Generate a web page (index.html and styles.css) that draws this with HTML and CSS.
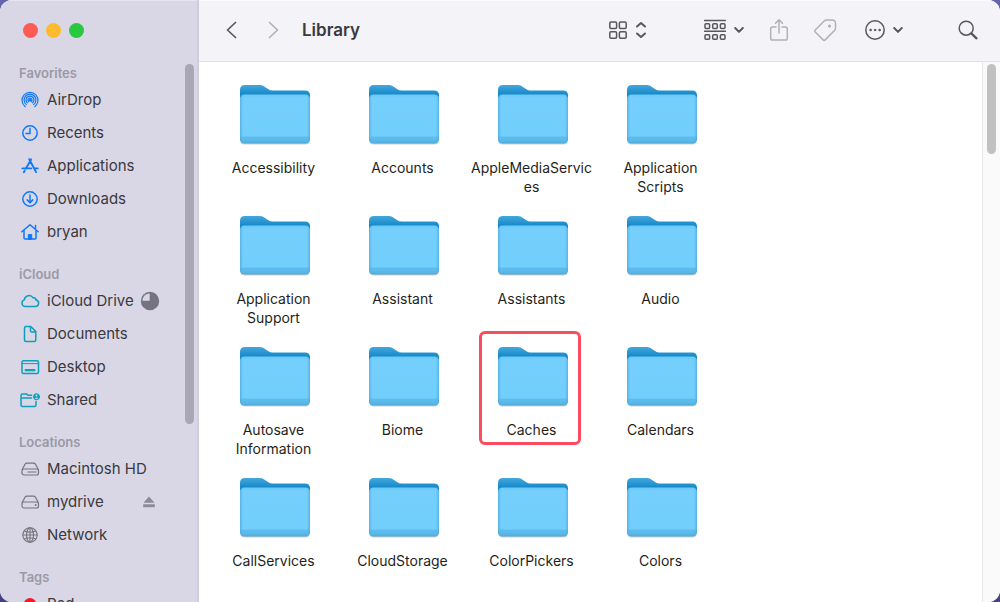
FILE: index.html
```html
<!DOCTYPE html>
<html lang="en">
<head>
<meta charset="utf-8">
<meta name="viewport" content="width=device-width, initial-scale=1">
<title>Library</title>
<link rel="stylesheet" href="styles.css">
</head>
<body>
<svg class="defs" aria-hidden="true">
  <defs>
    <linearGradient id="tab" x1="0" y1="0" x2="0" y2="1">
      <stop offset="0" stop-color="#43a7dc"/><stop offset=".3" stop-color="#1b8ccb"/><stop offset=".5" stop-color="#0c7fc2"/>
    </linearGradient>
    <linearGradient id="front" x1="0" y1="0" x2="0" y2="1">
      <stop offset="0" stop-color="#6bc9f8"/><stop offset=".08" stop-color="#74cffb"/><stop offset=".84" stop-color="#72cefb"/><stop offset=".88" stop-color="#5fbeee"/><stop offset=".97" stop-color="#55b5e8"/><stop offset="1" stop-color="#489fce"/>
    </linearGradient>
    <linearGradient id="sides">
      <stop offset="0" stop-color="#3f9fd2" stop-opacity=".6"/><stop offset=".05" stop-color="#57b9ec" stop-opacity="0"/><stop offset=".95" stop-color="#57b9ec" stop-opacity="0"/><stop offset="1" stop-color="#3f9fd2" stop-opacity=".6"/>
    </linearGradient>
    <symbol id="folder" viewBox="0 0 75 64">
      <path d="M4 20V7q0-5 5-5h15q3 0 5 2l3 2q2 1.500 5 1.500h32q5 0 5 5V30H4z" fill="url(#tab)"/>
      <rect x="4" y="12" width="70" height="49.500" rx="4.500" fill="#777" opacity=".35"/>
      <rect x="4" y="11.500" width="70" height="49" rx="4.500" fill="url(#front)"/>
      <rect x="4" y="11.500" width="70" height="49" rx="4.500" fill="url(#sides)"/>
      <path d="M5 54.500h68" stroke="#5ab9e9" stroke-width=".7"/>
    </symbol>
    <symbol id="chevron" viewBox="0 0 10 10"><path d="M1.200 3l3.800 3.900L8.800 3"/></symbol>
  </defs>
</svg>
<div class="window">
  <aside class="sidebar">
    <div class="lights">
      <button class="light close" aria-label="Close"></button>
      <button class="light minimize" aria-label="Minimize"></button>
      <button class="light zoom" aria-label="Zoom"></button>
    </div>
    <nav class="places">
      <section class="group">
        <h2 class="heading">Favorites</h2>
        <a class="place" href="#airdrop"><svg class="glyph blue" viewBox="0 0 20 20"><g stroke-width="1.200"><path d="M5.200 16.700A8 8 0 1 1 14.800 16.700"/><path d="M6.300 14.600A5.900 5.900 0 1 1 13.700 14.600"/><path d="M7.400 12.900A3.900 3.900 0 1 1 12.600 12.900"/><path d="M8.600 11.500A2 2 0 1 1 11.400 11.500"/></g><circle class="solid" cx="10" cy="10.200" r="1"/></svg>AirDrop</a>
        <a class="place" href="#recents"><svg class="glyph blue" viewBox="0 0 20 20"><circle cx="10" cy="10" r="7.200"/><path d="M10 5.500V10.500H6"/></svg>Recents</a>
        <a class="place" href="#applications"><svg class="glyph blue" viewBox="0 0 20 20"><g stroke-width="1.900"><path d="M10.800 4.200L5.700 12.800M9.200 3.200l6.900 12.900M2.300 12.400h9M14.700 12.400h3M4.700 14.800L3.800 16.300M11 3.200l-.7 1.200"/></g></svg>Applications</a>
        <a class="place" href="#downloads"><svg class="glyph blue" viewBox="0 0 20 20"><circle cx="10" cy="10" r="7.200"/><path d="M10 6v7.500M7.200 10.900L10 13.700l2.800-2.800"/></svg>Downloads</a>
        <a class="place" href="#bryan"><svg class="glyph blue" viewBox="0 0 20 20"><path d="M1.800 9.800L10 2.800l8.200 7M4 8.500V16q0 1 1 1h10q1 0 1-1V8.500M15.500 3.500v4"/><path class="solid" d="M8.300 17v-4.500h3.400V17z"/></svg>bryan</a>
      </section>
      <section class="group">
        <h2 class="heading">iCloud</h2>
        <a class="place" href="#icloud-drive"><svg class="glyph teal" viewBox="0 0 20 20"><path d="M5 15.500h10.300a3.300 3.300 0 0 0 .8-6.500 2.700 2.700 0 0 0-3-2.200A4.800 4.800 0 0 0 4.300 8.900 3.400 3.400 0 0 0 5 15.500z"/></svg>iCloud Drive<svg class="progress" viewBox="0 0 20 20" role="img" aria-label="Syncing"><circle cx="10" cy="10" r="9.200" fill="#75737f"/><path d="M9.700 2.400V9.700H2.400A7.600 7.600 0 0 1 9.700 2.400z" fill="#d9d7e5"/></svg></a>
        <a class="place" href="#documents"><svg class="glyph teal" viewBox="0 0 20 20"><path d="M6 2.500h4.800l5 5V16q0 1.500-1.500 1.500H6Q4.500 17.500 4.500 16V4Q4.500 2.500 6 2.500zM10.500 2.800V7q0 1 1 1h4"/></svg>Documents</a>
        <a class="place" href="#desktop"><svg class="glyph teal" viewBox="0 0 20 20"><rect x="2" y="3.800" width="16.500" height="12.700" rx="1.500"/><path d="M2 6.600h16.500" stroke-width="1"/><path class="solid" d="M5.500 12.500h9.500v1.300H5.500z"/></svg>Desktop</a>
        <a class="place" href="#shared"><svg class="glyph teal" viewBox="0 0 20 20"><path d="M11.500 5.200H8L6.700 4H2.500Q1 4 1 5.500V15q0 1.500 1.500 1.500H14.500q1.500 0 1.500-1.500v-3.500M1 8h10.500"/><circle class="solid" cx="16.500" cy="6.700" r="3"/><circle cx="16.500" cy="5.600" r="1" fill="#d9d7e5" stroke="none"/><path d="M14.700 8.700q1.800-2.200 3.600 0" fill="#d9d7e5" stroke="none"/></svg>Shared</a>
      </section>
      <section class="group">
        <h2 class="heading">Locations</h2>
        <a class="place" href="#macintosh-hd"><svg class="glyph gray" viewBox="0 0 20 20"><path d="M2.200 10.500L5 5.300Q5.600 4.200 7 4.200h6.500q1.400 0 2 1.100l2.800 5.200"/><rect x="2" y="10" width="16.500" height="6" rx="2"/><path d="M8 13h8" stroke-dasharray="1 .5"/></svg>Macintosh HD</a>
        <a class="place" href="#mydrive"><svg class="glyph gray" viewBox="0 0 20 20"><path d="M2.200 10.500L5 5.300Q5.600 4.200 7 4.200h6.500q1.400 0 2 1.100l2.800 5.200"/><rect x="2" y="10" width="16.500" height="6" rx="2"/><circle class="solid" cx="15.500" cy="13" r=".5"/></svg>mydrive<svg class="eject" viewBox="0 0 14 14" role="img" aria-label="Eject"><path d="M7 1.500l5.500 6.300h-11zM1.200 9.300h11.600v2.900H1.200z"/></svg></a>
        <a class="place" href="#network"><svg class="glyph gray" viewBox="0 0 20 20"><g stroke-width="1.100"><circle cx="10" cy="10" r="7.200"/><ellipse cx="10" cy="10" rx="3.500" ry="7.200"/><path d="M10 2.800v14.400M2.800 10h14.400M4.200 6q5.800 2.400 11.600 0M4.200 14q5.800-2.400 11.600 0"/></g></svg>Network</a>
      </section>
      <section class="group">
        <h2 class="heading">Tags</h2>
        <a class="place" href="#red"><svg class="glyph" viewBox="0 0 20 20"><circle cx="10" cy="10" r="6" fill="#fc1421" stroke="none"/></svg>Red</a>
      </section>
    </nav>
    <div class="thumb side-thumb"></div>
  </aside>
  <main class="main">
    <header class="toolbar">
      <button class="tool" aria-label="Back"><svg class="i20" viewBox="0 0 20 20"><path d="M14.500 2.500L6.500 10l8 7.500" stroke-width="1.700"/></svg></button>
      <button class="tool forward faint" aria-label="Forward"><svg class="i20" viewBox="0 0 20 20"><path d="M6.500 2.500l8 7.500-8 7.500" stroke-width="1.700"/></svg></button>
      <h1 class="title">Library</h1>
      <div class="tools">
        <button class="tool view" aria-label="View as icons"><svg class="i18" viewBox="0 0 18 18"><rect x=".8" y="1" width="6.800" height="6.500" rx="1.200"/><rect x="10.400" y="1" width="6.800" height="6.500" rx="1.200"/><rect x=".8" y="10.700" width="6.800" height="6.500" rx="1.200"/><rect x="10.400" y="10.700" width="6.800" height="6.500" rx="1.200"/></svg><svg class="updown" viewBox="0 0 12 18"><path d="M2 5.500L6 2l4 3.500M2 12.500L6 16l4-3.500"/></svg></button>
        <button class="tool arrange" aria-label="Group items"><svg class="i22" viewBox="0 0 22 22"><path d="M.5 1.500h21M.5 12.300h21"/><g><rect x="1" y="4.800" width="4.600" height="4.600" rx="1"/><rect x="8.700" y="4.800" width="4.600" height="4.600" rx="1"/><rect x="16.400" y="4.800" width="4.600" height="4.600" rx="1"/><rect x="1" y="15.700" width="4.600" height="4.600" rx="1"/><rect x="8.700" y="15.700" width="4.600" height="4.600" rx="1"/><rect x="16.400" y="15.700" width="4.600" height="4.600" rx="1"/></g></svg><svg class="chev"><use href="#chevron"/></svg></button>
        <button class="tool share faint" aria-label="Share"><svg class="i22" viewBox="0 0 22 22"><path d="M8 8H4.500Q2.700 8 2.700 9.800V19.200Q2.700 21 4.500 21H17.500q1.800 0 1.800-1.800V9.800Q19.300 8 17.500 8H14M11 14V1M7.500 4.300L11 .8l3.500 3.500"/></svg></button>
        <button class="tool tag faint" aria-label="Edit tags"><svg class="i24" viewBox="0 0 24 24"><path d="M13.500 2h5.500Q22.500 2 22.500 5.500v4.500q0 1.500-1 2.500l-9.300 9.400q-1 1-2 0L2.200 14q-1-1 0-2l9-9q1-1 2.300-1z"/><circle cx="16.500" cy="8" r=".8"/></svg></button>
        <button class="tool more" aria-label="More"><svg class="i20" viewBox="0 0 20 20"><circle cx="10" cy="10" r="9.200"/><g class="solid"><circle cx="5.500" cy="10" r=".8"/><circle cx="10" cy="10" r=".8"/><circle cx="14.500" cy="10" r=".8"/></g></svg><svg class="chev"><use href="#chevron"/></svg></button>
        <button class="tool search" aria-label="Search"><svg class="i20" viewBox="0 0 20 20"><circle cx="8.200" cy="8.200" r="7"/><path d="M13.300 13.300l5.200 5" stroke-width="2.300"/></svg></button>
      </div>
    </header>
    <div class="content">
      <ul class="files">
        <li class="file"><svg class="folder"><use href="#folder"/></svg><span class="name">Accessibility</span></li>
        <li class="file"><svg class="folder"><use href="#folder"/></svg><span class="name">Accounts</span></li>
        <li class="file"><svg class="folder"><use href="#folder"/></svg><span class="name">AppleMediaServices</span></li>
        <li class="file"><svg class="folder"><use href="#folder"/></svg><span class="name">Application Scripts</span></li>
        <li class="file"><svg class="folder"><use href="#folder"/></svg><span class="name">Application Support</span></li>
        <li class="file"><svg class="folder"><use href="#folder"/></svg><span class="name">Assistant</span></li>
        <li class="file"><svg class="folder"><use href="#folder"/></svg><span class="name">Assistants</span></li>
        <li class="file"><svg class="folder"><use href="#folder"/></svg><span class="name">Audio</span></li>
        <li class="file"><svg class="folder"><use href="#folder"/></svg><span class="name">Autosave Information</span></li>
        <li class="file"><svg class="folder"><use href="#folder"/></svg><span class="name">Biome</span></li>
        <li class="file marked"><svg class="folder"><use href="#folder"/></svg><span class="name">Caches</span></li>
        <li class="file"><svg class="folder"><use href="#folder"/></svg><span class="name">Calendars</span></li>
        <li class="file"><svg class="folder"><use href="#folder"/></svg><span class="name">CallServices</span></li>
        <li class="file"><svg class="folder"><use href="#folder"/></svg><span class="name">CloudStorage</span></li>
        <li class="file"><svg class="folder"><use href="#folder"/></svg><span class="name">ColorPickers</span></li>
        <li class="file"><svg class="folder"><use href="#folder"/></svg><span class="name">Colors</span></li>
      </ul>
      <div class="track"><div class="thumb main-thumb"></div></div>
    </div>
  </main>
</div>
</body>
</html>
```
FILE: styles.css
```css
*, *::after { box-sizing: border-box; }

body {
  margin: 0;
  background: linear-gradient(#6763ab, #45427f);
  font-family: Inter, "Liberation Sans", sans-serif;
  color: #3a393f;
}

h1, h2, ul { margin: 0; padding: 0; }

button {
  border: 0;
  padding: 0;
  background: none;
  color: inherit;
}

svg {
  flex: none;
  fill: none;
  stroke: currentColor;
  stroke-width: 1.5;
  stroke-linecap: round;
  stroke-linejoin: round;
}

.solid { fill: currentColor; stroke-width: 1; }

.defs { position: absolute; width: 0; height: 0; }

.window {
  display: flex;
  height: 100vh;
  overflow: hidden;
  border-radius: 12px;
  background: #fff;
}

.sidebar {
  position: relative;
  flex: none;
  width: 199px;
  overflow: hidden;
  background: #d9d7e5;
  border-right: 2px solid #cfcddd;
  box-shadow: inset 0 1px #e6e4ef;
}

.lights {
  display: flex;
  gap: 8px;
  padding: 23px 23px 25px;
}

.light {
  width: 15px;
  height: 15px;
  border-radius: 50%;
}

.close { background: #fe5b55; }
.minimize { background: #fdbb2d; }
.zoom { background: #28c840; }

.places {
  display: flex;
  flex-direction: column;
  gap: 16px;
  padding: 0 19px;
}

.heading {
  font-size: 13px;
  font-weight: 600;
  line-height: 20px;
  color: #9b99a7;
}

.place {
  display: flex;
  align-items: center;
  height: 33px;
  padding-left: 1px;
  font-size: 15px;
  color: inherit;
  text-decoration: none;
  white-space: nowrap;
}

.glyph {
  width: 20px;
  height: 20px;
  margin-right: 7px;
}

.blue { color: #0f78fb; }
.teal { color: #0d9fbd; }
.gray { color: #75747e; stroke-width: 1.2; }

.progress {
  width: 20px;
  height: 20px;
  margin-left: 6px;
  stroke: none;
}

.eject {
  width: 14px;
  height: 14px;
  margin: 0 22px 0 auto;
  fill: #8d8b98;
  stroke: none;
}

.thumb {
  width: 9px;
  border-radius: 5px;
}

.side-thumb {
  position: absolute;
  top: 64px;
  right: 3px;
  height: 360px;
  background: #a9a7b4;
}

.main {
  display: flex;
  flex: 1;
  flex-direction: column;
  min-width: 0;
}

.toolbar {
  display: flex;
  flex: none;
  align-items: center;
  height: 62px;
  padding: 0 22px 1px;
  background: #f4f3f8;
  box-shadow: inset 0 1px #fbfbfd;
  border-bottom: 1px solid #e2e1e6;
  color: #58575c;
}

.tool {
  display: flex;
  align-items: center;
  gap: 8px;
}

.faint { color: #b2b1b6; }
.forward { margin-left: 22px; }

.title {
  margin-left: 19px;
  font-size: 17px;
  font-weight: 600;
  color: #3a393e;
}

.tools {
  display: flex;
  align-items: center;
  margin-left: auto;
}

.arrange { margin-left: 57px; }
.share { margin-left: 24px; }
.tag { margin-left: 23px; }
.more { margin-left: 28px; }
.search { margin-left: 55px; }

.i18 { width: 18px; height: 18px; }
.i20 { width: 20px; height: 20px; }
.i22 { width: 22px; height: 22px; }
.i24 { width: 24px; height: 24px; }
.updown { width: 12px; height: 18px; stroke-width: 2; }
.chev { width: 10px; height: 10px; stroke-width: 2; }

.content {
  display: flex;
  flex: 1;
  justify-content: space-between;
  min-height: 0;
}

.files {
  display: grid;
  grid-template-columns: repeat(4, 129px);
  grid-auto-rows: 131px;
  padding: 21px 10px;
  list-style: none;
}

.file {
  position: relative;
  display: flex;
  flex-direction: column;
  align-items: center;
}

.folder {
  width: 75px;
  height: 64px;
  stroke: none;
}

.name {
  max-width: 122px;
  margin-top: 11px;
  font-size: 14px;
  line-height: 19px;
  color: #1f1f21;
  text-align: center;
  overflow-wrap: anywhere;
}

.marked::after {
  content: "";
  position: absolute;
  top: -14px;
  left: 12px;
  width: 102px;
  height: 114px;
  border: 3px solid #fb4b60;
  border-radius: 6px;
}

.track {
  flex: none;
  width: 18px;
  padding: 2px 4px;
  background: #fafafa;
  border-left: 1px solid #e8e8e8;
}

.main-thumb {
  height: 90px;
  background: #c1c1c1;
}
```
